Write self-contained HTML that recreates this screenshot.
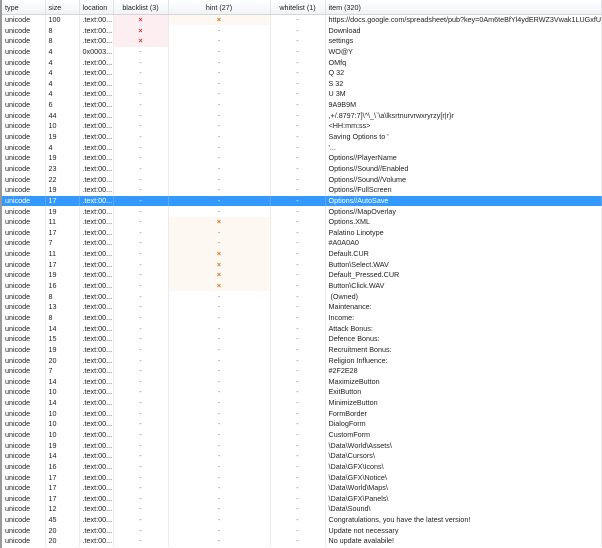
<!DOCTYPE html>
<html><head><meta charset="utf-8"><style>
*{margin:0;padding:0;box-sizing:border-box}
body{width:602px;height:548px;overflow:hidden;background:#fff;font-family:"Liberation Sans",sans-serif;font-size:7.2px;color:#1e1e1e;position:relative}
.lb{position:absolute;left:0;top:0;width:2px;height:548px;background:#9a9a9a}
table{position:absolute;left:2px;top:0;border-collapse:collapse;table-layout:fixed;width:600px}
th{height:14.7px;font-weight:normal;text-align:left;padding-left:3px;background:linear-gradient(#fff,#f1f3f6);border-right:1px solid #e0e3e8;border-bottom:1px solid #d5d5d5;white-space:nowrap;overflow:hidden}
th.c{text-align:center;padding-left:0}
td{height:10.65px;line-height:10px;padding-left:3px;border-right:1px solid #ececec;white-space:nowrap;overflow:hidden}
td.c{text-align:center;padding-left:0;color:#777}
td.b{background:#fdeef2}
td.h{background:#fdf8f1}
.x{color:#d03030;font-weight:bold}
.xo{color:#e07020;font-weight:bold}
tr.s td{background:#3399ff;color:#fff;border-right-color:#5aa9ff}
</style></head><body><div class="lb"></div>
<table>
<colgroup><col style="width:43px"><col style="width:34px"><col style="width:34px"><col style="width:55px"><col style="width:102px"><col style="width:55px"><col></colgroup>
<tr><th>type</th><th>size</th><th>location</th><th class="c">blacklist (3)</th><th class="c">hint (27)</th><th class="c">whitelist (1)</th><th>item (320)</th></tr>
<tr><td>unicode</td><td>100</td><td>.text:00...</td><td class="c b"><span class="x">×</span></td><td class="c h"><span class="xo">×</span></td><td class="c">-</td><td>https://docs.google.com/spreadsheet/pub?key=0Am6teBfYl4ydERWZ3Vwak1LUGxfUmxFX...</td></tr>
<tr><td>unicode</td><td>8</td><td>.text:00...</td><td class="c b"><span class="x">×</span></td><td class="c">-</td><td class="c">-</td><td>Download</td></tr>
<tr><td>unicode</td><td>8</td><td>.text:00...</td><td class="c b"><span class="x">×</span></td><td class="c">-</td><td class="c">-</td><td>settings</td></tr>
<tr><td>unicode</td><td>4</td><td>0x0003...</td><td class="c">-</td><td class="c">-</td><td class="c">-</td><td>WO@Y</td></tr>
<tr><td>unicode</td><td>4</td><td>.text:00...</td><td class="c">-</td><td class="c">-</td><td class="c">-</td><td>OMfq</td></tr>
<tr><td>unicode</td><td>4</td><td>.text:00...</td><td class="c">-</td><td class="c">-</td><td class="c">-</td><td>Q 32</td></tr>
<tr><td>unicode</td><td>4</td><td>.text:00...</td><td class="c">-</td><td class="c">-</td><td class="c">-</td><td>S 32</td></tr>
<tr><td>unicode</td><td>4</td><td>.text:00...</td><td class="c">-</td><td class="c">-</td><td class="c">-</td><td>U 3M</td></tr>
<tr><td>unicode</td><td>6</td><td>.text:00...</td><td class="c">-</td><td class="c">-</td><td class="c">-</td><td>9A9B9M</td></tr>
<tr><td>unicode</td><td>44</td><td>.text:00...</td><td class="c">-</td><td class="c">-</td><td class="c">-</td><td>,+/.8797:7]\^\_\`\a\lksrtnurvrwxryrzy[r|r}r</td></tr>
<tr><td>unicode</td><td>10</td><td>.text:00...</td><td class="c">-</td><td class="c">-</td><td class="c">-</td><td>&lt;HH:mm:ss&gt;</td></tr>
<tr><td>unicode</td><td>19</td><td>.text:00...</td><td class="c">-</td><td class="c">-</td><td class="c">-</td><td>Saving Options to '</td></tr>
<tr><td>unicode</td><td>4</td><td>.text:00...</td><td class="c">-</td><td class="c">-</td><td class="c">-</td><td>'...</td></tr>
<tr><td>unicode</td><td>19</td><td>.text:00...</td><td class="c">-</td><td class="c">-</td><td class="c">-</td><td>Options//PlayerName</td></tr>
<tr><td>unicode</td><td>23</td><td>.text:00...</td><td class="c">-</td><td class="c">-</td><td class="c">-</td><td>Options//Sound//Enabled</td></tr>
<tr><td>unicode</td><td>22</td><td>.text:00...</td><td class="c">-</td><td class="c">-</td><td class="c">-</td><td>Options//Sound//Volume</td></tr>
<tr><td>unicode</td><td>19</td><td>.text:00...</td><td class="c">-</td><td class="c">-</td><td class="c">-</td><td>Options//FullScreen</td></tr>
<tr class="s"><td>unicode</td><td>17</td><td>.text:00...</td><td class="c">-</td><td class="c">-</td><td class="c">-</td><td>Options//AutoSave</td></tr>
<tr><td>unicode</td><td>19</td><td>.text:00...</td><td class="c">-</td><td class="c">-</td><td class="c">-</td><td>Options//MapOverlay</td></tr>
<tr><td>unicode</td><td>11</td><td>.text:00...</td><td class="c">-</td><td class="c h"><span class="xo">×</span></td><td class="c">-</td><td>Options.XML</td></tr>
<tr><td>unicode</td><td>17</td><td>.text:00...</td><td class="c">-</td><td class="c h">-</td><td class="c">-</td><td>Palatino Linotype</td></tr>
<tr><td>unicode</td><td>7</td><td>.text:00...</td><td class="c">-</td><td class="c h">-</td><td class="c">-</td><td>#A0A0A0</td></tr>
<tr><td>unicode</td><td>11</td><td>.text:00...</td><td class="c">-</td><td class="c h"><span class="xo">×</span></td><td class="c">-</td><td>Default.CUR</td></tr>
<tr><td>unicode</td><td>17</td><td>.text:00...</td><td class="c">-</td><td class="c h"><span class="xo">×</span></td><td class="c">-</td><td>Button\Select.WAV</td></tr>
<tr><td>unicode</td><td>19</td><td>.text:00...</td><td class="c">-</td><td class="c h"><span class="xo">×</span></td><td class="c">-</td><td>Default_Pressed.CUR</td></tr>
<tr><td>unicode</td><td>16</td><td>.text:00...</td><td class="c">-</td><td class="c h"><span class="xo">×</span></td><td class="c">-</td><td>Button\Click.WAV</td></tr>
<tr><td>unicode</td><td>8</td><td>.text:00...</td><td class="c">-</td><td class="c">-</td><td class="c">-</td><td>&nbsp;(Owned)</td></tr>
<tr><td>unicode</td><td>13</td><td>.text:00...</td><td class="c">-</td><td class="c">-</td><td class="c">-</td><td>Maintenance:</td></tr>
<tr><td>unicode</td><td>8</td><td>.text:00...</td><td class="c">-</td><td class="c">-</td><td class="c">-</td><td>Income:</td></tr>
<tr><td>unicode</td><td>14</td><td>.text:00...</td><td class="c">-</td><td class="c">-</td><td class="c">-</td><td>Attack Bonus:</td></tr>
<tr><td>unicode</td><td>15</td><td>.text:00...</td><td class="c">-</td><td class="c">-</td><td class="c">-</td><td>Defence Bonus:</td></tr>
<tr><td>unicode</td><td>19</td><td>.text:00...</td><td class="c">-</td><td class="c">-</td><td class="c">-</td><td>Recruitment Bonus:</td></tr>
<tr><td>unicode</td><td>20</td><td>.text:00...</td><td class="c">-</td><td class="c">-</td><td class="c">-</td><td>Religion Influence:</td></tr>
<tr><td>unicode</td><td>7</td><td>.text:00...</td><td class="c">-</td><td class="c">-</td><td class="c">-</td><td>#2F2E28</td></tr>
<tr><td>unicode</td><td>14</td><td>.text:00...</td><td class="c">-</td><td class="c">-</td><td class="c">-</td><td>MaximizeButton</td></tr>
<tr><td>unicode</td><td>10</td><td>.text:00...</td><td class="c">-</td><td class="c">-</td><td class="c">-</td><td>ExitButton</td></tr>
<tr><td>unicode</td><td>14</td><td>.text:00...</td><td class="c">-</td><td class="c">-</td><td class="c">-</td><td>MinimizeButton</td></tr>
<tr><td>unicode</td><td>10</td><td>.text:00...</td><td class="c">-</td><td class="c">-</td><td class="c">-</td><td>FormBorder</td></tr>
<tr><td>unicode</td><td>10</td><td>.text:00...</td><td class="c">-</td><td class="c">-</td><td class="c">-</td><td>DialogForm</td></tr>
<tr><td>unicode</td><td>10</td><td>.text:00...</td><td class="c">-</td><td class="c">-</td><td class="c">-</td><td>CustomForm</td></tr>
<tr><td>unicode</td><td>19</td><td>.text:00...</td><td class="c">-</td><td class="c">-</td><td class="c">-</td><td>\Data\World\Assets\</td></tr>
<tr><td>unicode</td><td>14</td><td>.text:00...</td><td class="c">-</td><td class="c">-</td><td class="c">-</td><td>\Data\Cursors\</td></tr>
<tr><td>unicode</td><td>16</td><td>.text:00...</td><td class="c">-</td><td class="c">-</td><td class="c">-</td><td>\Data\GFX\Icons\</td></tr>
<tr><td>unicode</td><td>17</td><td>.text:00...</td><td class="c">-</td><td class="c">-</td><td class="c">-</td><td>\Data\GFX\Notice\</td></tr>
<tr><td>unicode</td><td>17</td><td>.text:00...</td><td class="c">-</td><td class="c">-</td><td class="c">-</td><td>\Data\World\Maps\</td></tr>
<tr><td>unicode</td><td>17</td><td>.text:00...</td><td class="c">-</td><td class="c">-</td><td class="c">-</td><td>\Data\GFX\Panels\</td></tr>
<tr><td>unicode</td><td>12</td><td>.text:00...</td><td class="c">-</td><td class="c">-</td><td class="c">-</td><td>\Data\Sound\</td></tr>
<tr><td>unicode</td><td>45</td><td>.text:00...</td><td class="c">-</td><td class="c">-</td><td class="c">-</td><td>Congratulations, you have the latest version!</td></tr>
<tr><td>unicode</td><td>20</td><td>.text:00...</td><td class="c">-</td><td class="c">-</td><td class="c">-</td><td>Update not necessary</td></tr>
<tr><td>unicode</td><td>20</td><td>.text:00...</td><td class="c">-</td><td class="c">-</td><td class="c">-</td><td>No update avalabile!</td></tr>
</table>
</body></html>
